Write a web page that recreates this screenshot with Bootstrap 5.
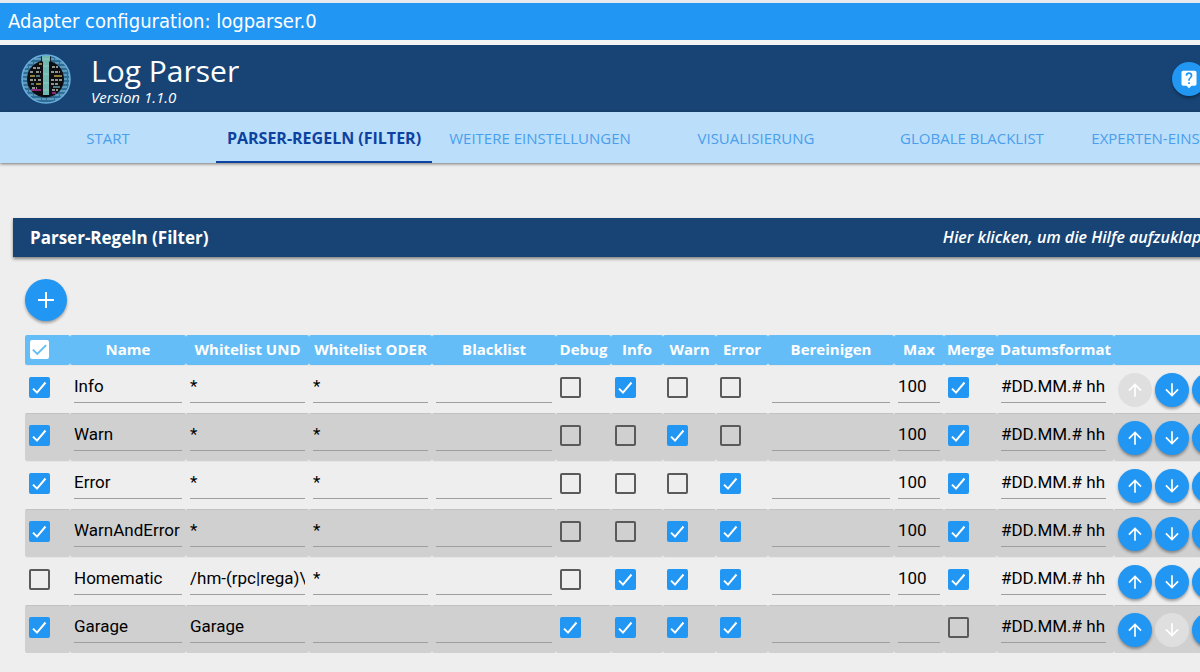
<!DOCTYPE html>
<html lang="de">
<head>
<meta charset="utf-8">
<meta name="viewport" content="width=device-width, initial-scale=1">
<title>Log Parser</title>
<link href="https://cdn.jsdelivr.net/npm/bootstrap@5.3.0/dist/css/bootstrap.min.css" rel="stylesheet">
<style>
  body { background: #eee; font-family: "Open Sans", "Noto Sans", sans-serif; overflow-x: hidden; color: #000; }
  .adapter-bar { background: #2196f3; border-top: 3px solid #e6eaee; border-bottom: 5px solid #f2f4f5; font: 20px/37px "DejaVu Sans Condensed", sans-serif; }
  .wide { width: 108%; }
  .app-head { background: #174475; height: 67px; padding: 0 90px 0 21px; }
  .app-title { font-size: 30px; line-height: 36px; font-weight: 500; }
  .app-version { font-size: 15px; line-height: 16px; font-style: italic; font-weight: 500; }
  .tab-strip { background: #bbdefb; box-shadow: 0 1px 3px rgba(0,0,0,.5); }
  .tab-strip .nav-link { font-size: 15px; line-height: 48px; padding: 2px 0 0; height: 51px; color: #4a9eec; border-radius: 0; border-bottom: 2px solid transparent; white-space: nowrap; }
  .tab-strip .nav-link.active { font-size: 16px; font-weight: 700; color: #0d42a0; border-color: #0d42a0; }
  .panel-head { background: #174475; margin: 55px 13px 0; padding: 0 50px 0 17px; line-height: 39px; box-shadow: 0 2px 3px rgba(0,0,0,.45); color: #fff; }
  .panel-head strong { font-size: 17px; }
  .panel-head em { font-size: 16px; font-weight: 600; }
  .rules-area { padding: 0 25px; }
  .round-btn { width: 34px; height: 34px; padding: 0; border: 0; border-radius: 50%; background: #2196f3; color: #fff; display: inline-flex; align-items: center; justify-content: center; flex: none; box-shadow: 0 2px 3px rgba(0,0,0,.35); }
  .round-btn:disabled { background: #dfdfdf; color: #fff; box-shadow: none; }
  .round-btn svg { width: 20px; height: 20px; fill: currentColor; }
  .add-btn { width: 42px; height: 42px; margin: 22px 0 14px; }
  .add-btn svg { width: 24px; height: 24px; }
  .rules { table-layout: fixed; width: 100%; border-collapse: separate; border-spacing: 0; }
  .rules th { background: #64bdf6; color: #fff; font-size: 15px; line-height: 28px; height: 30px; padding: 0 0 2px; text-align: center; border-radius: 2px; white-space: nowrap; }
  .rules td { height: 48px; padding: 0 4px; vertical-align: top; border-radius: 2px; }
  .rules tbody tr:nth-child(even) td { background: #d0d0d0; border-top: 1px solid #c2c2c2; }
  .rules tbody tr:nth-child(odd) td { border-top: 1px solid #e6e6e6; }
  .rules input[type=text] { display: block; width: 100%; height: 33px; margin-top: 4px; padding: 0 0 1px; border: 0; border-bottom: 1px solid #9e9e9e; background: transparent; font: 17px Roboto, sans-serif; color: #000; border-radius: 0; outline: 0; }
  .rules .form-check-input { display: block; width: 21px; height: 21px; margin: 11px 0 0; border: 2px solid #5a5a5a; border-radius: 2px; background-color: transparent; }
  .rules .form-check-input:checked { border-color: #2196f3; background: #2196f3 url("data:image/svg+xml,%3Csvg xmlns='http://www.w3.org/2000/svg' viewBox='0 0 17 17'%3E%3Cpath d='M2 9.6L6 13.6L14.500 3.500' fill='none' stroke='white' stroke-width='2'/%3E%3C/svg%3E") center/100% no-repeat; }
  .rules th .form-check-input { width: 19px; height: 19px; margin: 0 0 0 5px; }
  .rules th .form-check-input:checked { border-color: #fff; background: #fff url("data:image/svg+xml,%3Csvg xmlns='http://www.w3.org/2000/svg' viewBox='0 0 17 17'%3E%3Cpath d='M1 8.6L6 13.6L16 3.6' fill='none' stroke='%2364bdf6' stroke-width='2.200'/%3E%3C/svg%3E") center/100% no-repeat; }
  .moves { gap: 3px; padding-top: 7px; }
  .w-check { width: 45px; } .w-name { width: 116px; } .w-list { width: 123px; } .w-blk { width: 124px; } .w-debug { width: 55px; }
  .w-level { width: 52px; } .w-error { width: 53px; } .w-clean { width: 126px; } .w-max { width: 50px; } .w-date { width: 117px; }
  .rules td.wider { padding-right: 8px; }
</style>
</head>
<body>
<div class="adapter-bar text-white px-2">Adapter configuration: logparser.0</div>
<div class="wide">
  <header class="app-head d-flex align-items-center text-white">
    <svg width="50" height="50" viewBox="0 0 50 50" aria-hidden="true">
      <defs><clipPath id="disc"><circle cx="25" cy="25" r="24"/></clipPath></defs>
      <g clip-path="url(#disc)">
        <rect width="50" height="50" fill="#2d6d97"/>
        <path d="M0 5h50M0 9h50M0 13h50M0 17h50M0 21h50M0 25h50M0 29h50M0 33h50M0 37h50M0 41h50M0 45h50" stroke="#6da9c6" stroke-width="1.300" stroke-dasharray="7 1 4 1"/>
        <circle cx="24.500" cy="25" r="18.500" fill="#0d0d12"/>
        <path d="M20 0h10v7H20z" fill="#172429"/>
        <path d="M12 14h7M31 13h6M9 18h4M15 18h5M30 18h9M9 26h6M17 26h4M30 26h11M30 30h8M11 34h5M31 36h6" stroke="#b9c4bc" stroke-width="1.300" stroke-dasharray="3 1"/>
        <path d="M9 22h5M15 30h5M33 22h8M18 10h3" stroke="#b7a84b" stroke-width="1.300"/>
        <path d="M10 30h3M15 22h4M32 33h7" stroke="#5d9ca6" stroke-width="1.300"/>
        <path d="M10 36h10M31 39h4" stroke="#b7309a" stroke-width="1.600"/>
        <path d="M21 0h8v7l-1 1v33h-6V8l-1-1z" fill="#72b8b2"/>
        <path d="M22 5h6M22 12h6M22 20h6M22 29h6M22 36h6" stroke="#8dcbc2"/>
      </g>
      <circle cx="25" cy="25" r="24" fill="none" stroke="#6aaede" stroke-width="1.500"/>
    </svg>
    <div class="ms-3 ps-1">
      <div class="app-title">Log Parser</div>
      <div class="app-version">Version 1.1.0</div>
    </div>
    <button class="round-btn ms-auto" type="button" aria-label="Hilfe">
      <svg viewBox="0 0 24 24"><path d="M19 2H5a2 2 0 0 0-2 2v14c0 1.100.9 2 2 2h4l3 3 3-3h4a2 2 0 0 0 2-2V4a2 2 0 0 0-2-2zm-6 16h-2v-2h2zm2.070-7.750-.9.920C13.450 11.900 13 12.500 13 14h-2v-.5c0-1.100.450-2.100 1.170-2.830l1.240-1.260A2 2 0 0 0 12 6a2 2 0 0 0-2 2H8a4 4 0 1 1 8 0c0 .880-.360 1.680-.930 2.250z"/></svg>
    </button>
  </header>
  <nav class="tab-strip nav nav-fill row row-cols-6 g-0 text-center">
    <a class="nav-link col" href="#">START</a>
    <a class="nav-link col active" href="#" aria-current="page">PARSER-REGELN (FILTER)</a>
    <a class="nav-link col" href="#">WEITERE EINSTELLUNGEN</a>
    <a class="nav-link col" href="#">VISUALISIERUNG</a>
    <a class="nav-link col" href="#">GLOBALE BLACKLIST</a>
    <a class="nav-link col" href="#">EXPERTEN-EINSTELLUNGEN</a>
  </nav>
  <div class="panel-head d-flex justify-content-between" role="button">
    <strong>Parser-Regeln (Filter)</strong>
    <em>Hier klicken, um die Hilfe aufzuklappen.</em>
  </div>
  <main class="rules-area">
    <button class="round-btn add-btn" type="button" aria-label="Regel hinzufügen">
      <svg viewBox="0 0 24 24"><path d="M20 13h-7v7h-2v-7H4v-2h7V4h2v7h7z"/></svg>
    </button>
    <table class="rules">
      <colgroup><col class="w-check"><col class="w-name"><col class="w-list"><col class="w-list"><col class="w-blk"><col class="w-debug"><col class="w-level"><col class="w-error"><col class="w-level"><col class="w-clean"><col class="w-max"><col class="w-error"><col class="w-date"><col></colgroup>
      <thead><tr>
        <th><input class="form-check-input" type="checkbox" checked aria-label="Alle Regeln"></th>
        <th>Name</th><th>Whitelist UND</th><th>Whitelist ODER</th><th>Blacklist</th><th>Debug</th><th>Info</th><th>Warn</th><th>Error</th><th>Bereinigen</th><th>Max</th><th>Merge</th><th>Datumsformat</th><th></th>
      </tr></thead>
      <tbody id="rules"></tbody>
    </table>
  </main>
</div>
<script src="https://cdn.jsdelivr.net/npm/bootstrap@5.3.0/dist/js/bootstrap.bundle.min.js"></script>
<script>
  // active, name, whitelist AND, whitelist OR, [debug, info, warn, error], max, merge
  const rules = [
    [1, 'Info', '*', '*', [0, 1, 0, 0], '100', 1],
    [1, 'Warn', '*', '*', [0, 0, 1, 0], '100', 1],
    [1, 'Error', '*', '*', [0, 0, 0, 1], '100', 1],
    [1, 'WarnAndError', '*', '*', [0, 0, 1, 1], '100', 1],
    [0, 'Homematic', '/hm-(rpc|rega)\\.0/', '*', [0, 1, 1, 1], '100', 1],
    [1, 'Garage', 'Garage', '', [1, 1, 1, 1], '', 0]
  ];
  const levels = ['Debug', 'Info', 'Warn', 'Error'];
  const check = (on, label) => `<td><input class="form-check-input" type="checkbox" aria-label="${label}"${on ? ' checked' : ''}></td>`;
  const text = (value, label, cls = '') => `<td class="${cls}"><input type="text" aria-label="${label}" value="${value}"></td>`;
  const button = (path, label, off) => `<button class="round-btn" type="button" aria-label="${label}"${off ? ' disabled' : ''}><svg viewBox="0 0 24 24"><path d="${path}"/></svg></button>`;
  const up = 'M4 12l1.410 1.410L11 7.830V20h2V7.830l5.580 5.590L20 12l-8-8z';
  const down = 'M20 12l-1.410-1.410L13 16.170V4h-2v12.170l-5.580-5.590L4 12l8 8z';
  const bin = 'M6 19a2 2 0 0 0 2 2h8a2 2 0 0 0 2-2V7H6zM19 4h-3.500l-1-1h-5l-1 1H5v2h14z';
  document.getElementById('rules').innerHTML = rules.map((r, i) => '<tr>' +
    check(r[0], 'Aktiv') + text(r[1], 'Name') + text(r[2], 'Whitelist UND') + text(r[3], 'Whitelist ODER') + text('', 'Blacklist') +
    r[4].map((on, k) => check(on, levels[k])).join('') +
    text('', 'Bereinigen') + text(r[5], 'Max') + check(r[6], 'Merge') + text('#DD.MM.# hh', 'Datumsformat', 'wider') +
    '<td><div class="d-flex moves">' + button(up, 'Nach oben', i === 0) + button(down, 'Nach unten', i === rules.length - 1) + button(bin, 'Löschen', false) + '</div></td></tr>').join('');
</script>
</body>
</html>
